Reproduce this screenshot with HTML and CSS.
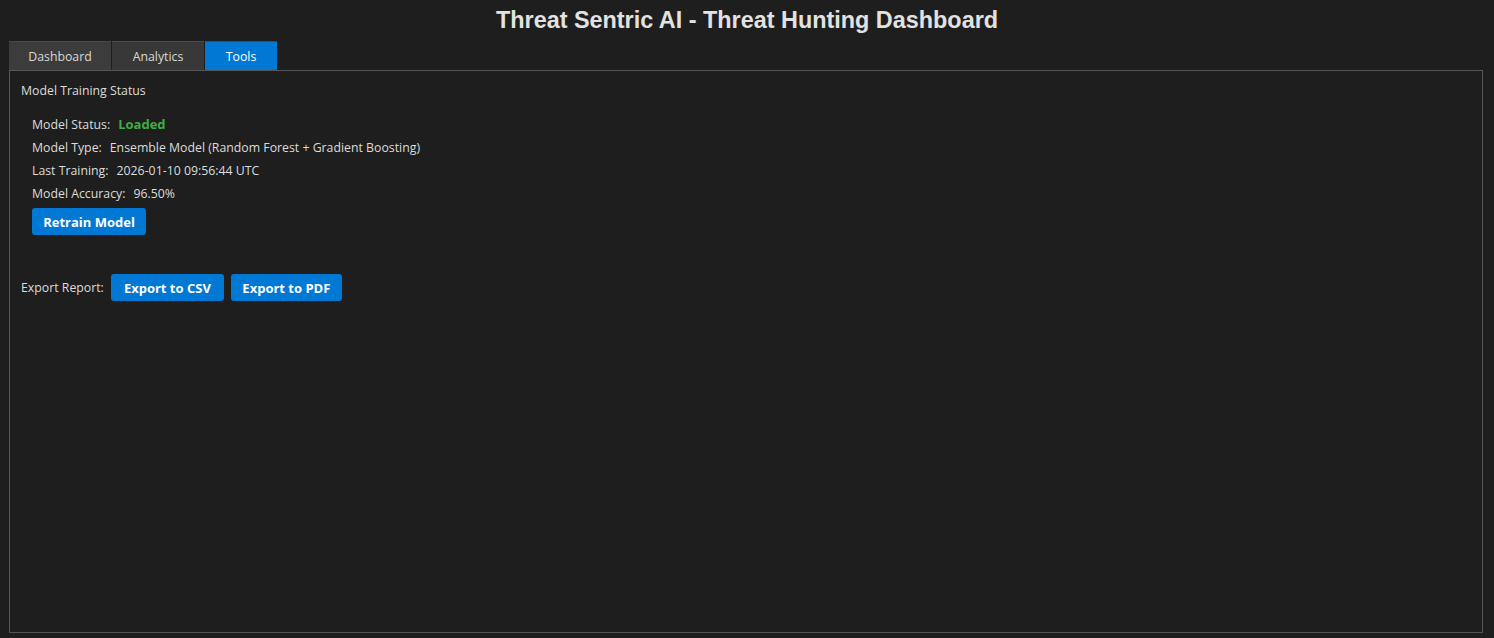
FILE: index.html
```html
<!DOCTYPE html>
<html>
<head>
<meta charset="utf-8">
<link rel="stylesheet" href="styles.css">
</head>
<body>
<h1 class="title">Threat Sentric AI - Threat Hunting Dashboard</h1>
<div class="tabs">
  <div class="tab">Dashboard</div>
  <div class="tab tab-analytics">Analytics</div>
  <div class="tab tab-active">Tools</div>
</div>
<div class="panel">
  <div class="section-title">Model Training Status</div>
  <div class="info">
    <div class="row"><span class="label">Model Status:</span><span class="value ok">Loaded</span></div>
    <div class="row"><span class="label">Model Type:</span><span class="value">Ensemble Model (Random Forest + Gradient Boosting)</span></div>
    <div class="row"><span class="label">Last Training:</span><span class="value">2026-01-10 09:56:44 UTC</span></div>
    <div class="row"><span class="label">Model Accuracy:</span><span class="value">96.50%</span></div>
    <button class="btn btn-retrain">Retrain Model</button>
  </div>
  <div class="export">
    <span class="export-label">Export Report:</span>
    <button class="btn btn-csv">Export to CSV</button>
    <button class="btn btn-pdf">Export to PDF</button>
  </div>
</div>
</body>
</html>
```
FILE: styles.css
```css
html, body {
  margin: 0;
  padding: 0;
  background: #1e1e1e;
  height: 638px;
  overflow: hidden;
}
body {
  font-family: "Open Sans", "Noto Sans", sans-serif;
  font-size: 12.3px;
  color: #dcdcdc;
}
.title {
  margin: 0;
  height: 41px;
  line-height: 41px;
  text-align: center;
  font-family: "Liberation Sans", Arial, sans-serif;
  font-weight: bold;
  font-size: 23.4px;
  color: #e2e2e2;
}
.tabs {
  display: flex;
  gap: 1px;
  margin-left: 9px;
  height: 29px;
}
.tab {
  width: 102px;
  height: 29px;
  box-sizing: border-box;
  background: #3c3c3c;
  border-top: 1px solid #4a4a4a;
  display: flex;
  align-items: center;
  justify-content: center;
  color: #d8d8d8;
  font-size: 12.3px;
}
.tab-analytics {
  width: 92px;
  background: #383838;
}
.tab-active {
  width: 72px;
  background: #0078d4;
  color: #ffffff;
}
.panel {
  margin-left: 9px;
  width: 1474px;
  height: 563px;
  box-sizing: border-box;
  border: 1px solid #555555;
  padding: 10px 0 0 11px;
}
.section-title {
  height: 19px;
  line-height: 19px;
}
.info {
  padding: 13px 0 0 11px;
}
.row {
  height: 23px;
  line-height: 23px;
  display: flex;
}
.label {
  margin-right: 8px;
}
.ok {
  color: #3cb043;
  font-weight: bold;
  font-size: 13px;
}
.btn {
  font-family: "Open Sans", "Noto Sans", sans-serif;
  font-weight: bold;
  font-size: 13px;
  color: #ffffff;
  background: #0078d4;
  border: none;
  border-radius: 3px;
  height: 27px;
  padding: 0;
  cursor: pointer;
}
.btn-retrain {
  width: 114px;
  margin-top: 3px;
  display: block;
}
.export {
  display: flex;
  align-items: center;
  margin-top: 39px;
}
.export-label {
  margin-right: 7px;
}
.btn-csv {
  width: 113px;
  margin-right: 7px;
}
.btn-pdf {
  width: 111px;
}
```
